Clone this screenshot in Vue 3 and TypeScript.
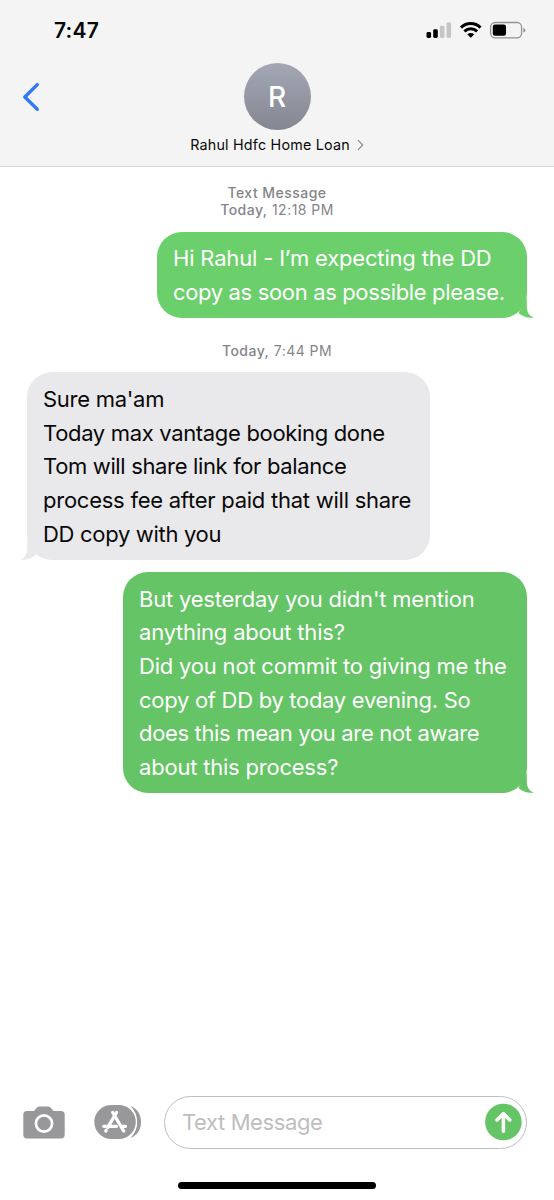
<script setup lang="ts">
interface Line {
  text: string
  spacing: number
}

interface Message {
  id: number
  kind: 'sent' | 'received'
  tone: string
  stamp?: { service?: string; day: string; time: string }
  lines: Line[]
}

const messages: Message[] = [
  {
    id: 1,
    kind: 'sent',
    tone: 'light',
    stamp: { service: 'Text Message', day: 'Today,', time: '12:18 PM' },
    lines: [
      { text: 'Hi Rahul - I’m expecting the DD', spacing: -0.18 },
      { text: 'copy as soon as possible please.', spacing: -0.35 },
    ],
  },
  {
    id: 2,
    kind: 'received',
    tone: 'grey',
    stamp: { day: 'Today,', time: '7:44 PM' },
    lines: [
      { text: "Sure ma'am", spacing: -0.27 },
      { text: 'Today max vantage booking done', spacing: -0.33 },
      { text: 'Tom will share link for balance', spacing: -0.35 },
      { text: 'process fee after paid that will share', spacing: -0.25 },
      { text: 'DD copy with you', spacing: -0.31 },
    ],
  },
  {
    id: 3,
    kind: 'sent',
    tone: 'deep',
    lines: [
      { text: "But yesterday you didn't mention", spacing: -0.21 },
      { text: 'anything about this?', spacing: -0.2 },
      { text: 'Did you not commit to giving me the', spacing: -0.2 },
      { text: 'copy of DD by today evening. So', spacing: -0.29 },
      { text: 'does this mean you are not aware', spacing: -0.34 },
      { text: 'about this process?', spacing: -0.21 },
    ],
  },
]
</script>

<template>
  <div class="phone">
    <header class="top">
      <div class="status">
        <span class="clock">7:47</span>
        <svg class="indicators" width="100" height="20" viewBox="0 0 100 20">
          <g>
            <rect x="0.5" y="12" width="4.6" height="6" rx="1.4" fill="#000" />
            <rect x="7.2" y="9.3" width="4.6" height="8.7" rx="1.4" fill="#000" />
            <rect x="13.9" y="5.8" width="4.6" height="12.2" rx="1.4" fill="#c5c5c6" />
            <rect x="20.5" y="2.4" width="4.6" height="15.6" rx="1.4" fill="#c5c5c6" />
          </g>
          <g fill="none" stroke="#000" stroke-width="3">
            <path d="M35 7.6C40.5 2.2 49 2.2 54.5 7.6" />
            <path d="M38.4 11.3C42.2 7.8 47.4 7.8 51.1 11.3" />
          </g>
          <path d="M41.3 14.2Q44.75 11.6 48.2 14.2L45.4 17.3Q44.75 18 44.1 17.3Z" fill="#000" />
          <rect x="64.6" y="2.5" width="31" height="15.3" rx="4.6" fill="none" stroke="#929293" stroke-width="1.3" />
          <rect x="66.8" y="4.6" width="13.2" height="11.2" rx="2.2" fill="#000" />
          <path d="M97.4 7.9Q99.3 8.5 99.3 10.2T97.4 12.5Z" fill="#8c8c8d" />
        </svg>
      </div>
      <div class="contact">
        <svg class="back" width="18" height="30" viewBox="0 0 18 30">
          <path d="M15.3 2.6L2.8 15L15.3 27.3" fill="none" stroke="#3478f6" stroke-width="3.4" stroke-linecap="round" stroke-linejoin="round" />
        </svg>
        <div class="avatar"><span>R</span></div>
      </div>
      <div class="name">
        <span>Rahul Hdfc Home Loan</span>
        <svg width="7" height="12" viewBox="0 0 7 12">
          <path d="M1 1.2L5.7 6L1 10.8" fill="none" stroke="#858588" stroke-width="1.1" />
        </svg>
      </div>
    </header>

    <main class="thread">
      <section v-for="m in messages" :key="m.id" class="entry" :class="m.kind">
        <div v-if="m.stamp" class="stamp">
          <div v-if="m.stamp.service" class="strong service">{{ m.stamp.service }}</div>
          <div class="when"><span class="strong">{{ m.stamp.day }}</span> {{ m.stamp.time }}</div>
        </div>
        <div class="bubble" :class="m.tone">
          <div v-for="l in m.lines" :key="l.text" class="line">
            <span :style="{ letterSpacing: l.spacing + 'px' }">{{ l.text }}</span>
          </div>
          <svg class="tail" width="16" height="22" viewBox="0 0 16 22">
            <path d="M3 12L8.800 2V10C8.800 16 11 20 15.800 21.500C10 22.500 4.500 20.500 0.500 17Z" />
          </svg>
        </div>
      </section>
    </main>

    <footer class="composer">
      <svg class="camera" width="42" height="33" viewBox="0 0 42 33">
        <path d="M4 5H11L14 1.6Q15 .6 16.5 .6H25Q26.5 .6 27.5 1.6L30.5 5H38Q41.7 5 41.7 8.7V28.8Q41.7 32.5 38 32.5H4Q.3 32.5 .3 28.8V8.7Q.3 5 4 5Z" fill="#98989a" />
        <circle cx="21" cy="17.5" r="8.1" fill="none" stroke="#fff" stroke-width="2.7" />
      </svg>
      <svg class="apps" width="48" height="36" viewBox="0 0 48 36">
        <path d="M36.5 2C43 4.5 47 10 47 18S43 31.5 36.5 34C41 29.5 43.2 24 43.2 18S41 6.5 36.5 2Z" fill="#98989a" />
        <rect x="0.3" y="1" width="41.5" height="34" rx="17" fill="#98989a" />
        <g stroke="#fff" stroke-width="3.3" stroke-linecap="round" fill="none">
          <path d="M22.5 8.5L13.8 23.3" />
          <path d="M18.7 8.5L29.7 27" />
          <path d="M9.8 22.3H22.5M27.5 22.3H31.5" />
          <path d="M12.2 26.2L11.8 27" />
        </g>
      </svg>
      <div class="field">
        <span>Text Message</span>
        <svg width="38" height="38" viewBox="0 0 38 38">
          <circle cx="19.4" cy="19" r="18.3" fill="#65c466" />
          <path d="M19.4 28.3V11M13 17L19.4 10.6L25.8 17" fill="none" stroke="#fff" stroke-width="3.5" stroke-linecap="round" stroke-linejoin="round" />
        </svg>
      </div>
    </footer>
    <div class="home"></div>
  </div>
</template>

<style>
body {
  margin: 0;
  background: #fff;
}
</style>

<style scoped>
.phone {
  width: 554px;
  height: 1200px;
  display: flex;
  flex-direction: column;
  overflow: hidden;
  background: #fff;
  color: #080808;
  font-family: Inter, "Liberation Sans", sans-serif;
}
.top {
  box-sizing: border-box;
  height: 167px;
  flex: none;
  background: #f4f4f4;
  border-bottom: 1px solid #d5d5d6;
}
.status {
  display: flex;
  justify-content: space-between;
  align-items: flex-start;
  height: 63px;
  box-sizing: border-box;
  padding: 20px 28px 0 54px;
}
.clock {
  font-size: 21px;
  line-height: 22px;
  font-weight: 600;
  letter-spacing: 0.2px;
}
.contact {
  display: grid;
  grid-template-columns: 1fr 67px 1fr;
  align-items: center;
  height: 67px;
}
.back {
  margin-left: 22px;
}
.avatar {
  height: 67px;
  border-radius: 50%;
  background: linear-gradient(#a4a8b5, #848791);
  color: #fff;
  font-size: 28px;
  font-weight: 500;
  display: flex;
  align-items: center;
  justify-content: center;
}
.name {
  display: flex;
  align-items: center;
  justify-content: center;
  gap: 7px;
  height: 20px;
  margin-top: 4.5px;
  font-size: 14.3px;
  letter-spacing: 0.22px;
}
.thread {
  flex: 1;
  padding: 17px 27px 0;
}
.entry {
  display: flex;
  flex-direction: column;
}
.stamp {
  height: 47.7px;
  text-align: center;
  font-size: 14px;
  line-height: 17.2px;
  letter-spacing: 0.47px;
  color: #858589;
}
.received .stamp {
  height: 30px;
}
.received {
  padding-top: 24px;
  padding-bottom: 12.5px;
}
.strong {
  font-weight: 500;
}
.bubble {
  position: relative;
  box-sizing: border-box;
  border-radius: 25px;
  padding: 10.8px 16px 8.4px;
  font-size: 22px;
  line-height: 33.65px;
  white-space: nowrap;
}
.line {
  height: 33.65px;
}
.light {
  width: 370px;
  align-self: flex-end;
  background: #6bd06b;
  color: #fff;
}
.grey {
  width: 403px;
  background: #e9e9eb;
}
.deep {
  width: 404px;
  align-self: flex-end;
  background: #65c466;
  color: #fff;
}
.tail {
  position: absolute;
  right: -7px;
  bottom: 0;
}
.light .tail {
  fill: #6bd06b;
}
.deep .tail {
  fill: #65c466;
}
.grey .tail {
  right: auto;
  left: -7px;
  transform: scaleX(-1);
  fill: #e9e9eb;
}
.composer {
  display: flex;
  align-items: center;
  height: 54px;
  padding: 0 27px 0 23px;
  flex: none;
}
.camera {
  flex: none;
}
.apps {
  flex: none;
  margin-left: 29px;
}
.field {
  box-sizing: border-box;
  flex: 1;
  height: 53px;
  margin-left: 22px;
  border: 1.3px solid #bebec2;
  border-radius: 27px;
  display: flex;
  align-items: center;
  justify-content: space-between;
  padding: 0 4px 0 17px;
  color: #bebec0;
  font-size: 22px;
  letter-spacing: -0.4px;
}
.home {
  flex: none;
  width: 198px;
  height: 7px;
  border-radius: 4px;
  background: #000;
  margin: 33px auto 11px;
}
</style>
